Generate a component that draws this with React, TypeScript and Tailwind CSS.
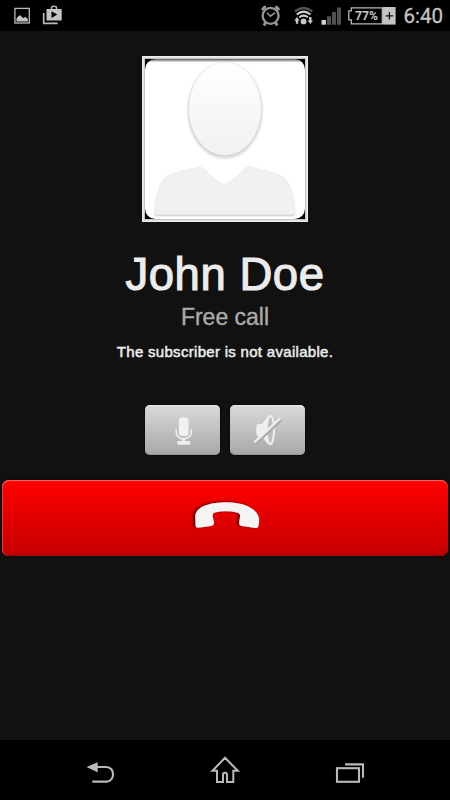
import React from "react";

function StatusBar() {
  return (
    <header className="flex h-[31px] shrink-0 items-start justify-between bg-black">
      <svg className="h-[31px] w-[70px]" viewBox="0 0 70 31" fill="none">
        <rect x="14.9" y="8.4" width="14.4" height="14.6" stroke="#b9b9b9" strokeWidth="1.3" />
        <path d="M16.5 21.5v-3l2-2.5 2-.7 1.5 2 1.5.8 2-1.2 2 1.5.5 3z" fill="#c4c4c4" />
        <path d="M43.7 13v10.3h14" stroke="#b9b9b9" strokeWidth="1.7" />
        <path d="M46.5 9h15.2v11.5H46.5z" fill="#c4c4c4" />
        <path d="M51.5 9V7.8Q51.5 6.2 54 6.2t2.5 1.6V9" stroke="#b9b9b9" strokeWidth="1.5" />
        <path d="M51.5 11.3v6.6l5.8-3.3z" fill="#000" />
      </svg>
      <div className="flex">
        <svg className="h-[31px] w-[145px]" viewBox="255 0 145 31" fill="none">
          <g stroke="#969696">
            <circle cx="270.6" cy="15.8" r="8" strokeWidth="2.3" />
            <path d="M267 12.8l3.4 3.4 4.6-3.6" strokeWidth="1.5" />
            <path d="M262.5 10.3q.5-3 3.5-3.5M278.7 10.3q-.5-3-3.5-3.5M265.6 22.5l-1.6 3M275.6 22.5l1.6 3" strokeWidth="2.8" />
          </g>
          <path d="M294.8 11.4Q303.5 4.7 312.3 11.4" stroke="#555" strokeWidth="2.3" />
          <path d="M296.8 14.5Q303.5 8.7 310.4 14.5M299.3 17.3q4.3-3.4 8.7 0" stroke="#d0d0d0" strokeWidth="2" />
          <circle cx="303.6" cy="21.4" r="2.9" fill="#c7c7c7" />
          <path d="M294.2 20.5l2.8-3.4 2.7 3.4h-1.5v3.3h-2.4v-3.3zM307.6 20.5h1.5v-3.4h2.4v3.4h1.5l-2.7 3.4z" fill="#c4c4c4" />
          <path d="M321.5 20h4.5v4.7h-4.5z" fill="#cecece" />
          <path d="M327 16.3h4v8.4h-4zM332 12h4v12.7h-4zM337 7.5h4v17.2h-4z" fill="#505050" />
          <path d="M382.3 7.8h-31v3h-2.5v9h2.5v4h31z" stroke="#b8b8b8" strokeWidth="1.3" />
          <path d="M383 7h12.6v17.6H383z" fill="#c4c4c4" />
          <path d="M389.4 12v7.6M385.7 15.8h7.4" stroke="#111" strokeWidth="1.3" />
          <text x="355" y="19.8" textLength="23" lengthAdjust="spacingAndGlyphs" fill="#c8c8c8" fontFamily="Roboto, sans-serif" fontWeight="700" fontSize="12.5">77%</text>
        </svg>
        <span className="mt-[3px] w-[50px] whitespace-nowrap pl-[3.5px] font-['Roboto',sans-serif] text-[20.5px] leading-[26px] text-[#c4c4c4] [-webkit-text-stroke:0.3px_#c4c4c4]">6:40</span>
      </div>
    </header>
  );
}

function Avatar() {
  return (
    <div className="mt-[25px] h-[166px] w-[166px] border border-[#ededed] bg-[#e2e2e2] p-px">
      <div className="h-full w-full border border-[#c6c6c6] bg-black">
        <svg className="h-full w-full" viewBox="145 59 160 160" fill="none">
          <defs>
            <linearGradient id="head" x1="0" y1="0" x2="0" y2="1"><stop stopColor="#fff" /><stop offset="1" stopColor="#f1f1f1" /></linearGradient>
            <linearGradient id="edge" x1="0" y1="0" x2="0" y2="1"><stop stopColor="#f3f3f3" /><stop offset="1" stopColor="#c5c5c5" /></linearGradient>
            <linearGradient id="top" x1="0" y1="0" x2="0" y2="1"><stop stopColor="#555" /><stop offset=".01" stopColor="#aaa" /><stop offset=".022" stopColor="#fff" /></linearGradient>
            <filter id="soft"><feGaussianBlur stdDeviation="1" /></filter>
          </defs>
          <rect x="145" y="59" width="160" height="160" rx="10.5" fill="url(#top)" />
          <ellipse cx="225" cy="110.5" rx="36.5" ry="47" stroke="#aaa" strokeWidth="1.5" opacity=".65" filter="url(#soft)" />
          <ellipse cx="225" cy="109.2" rx="36.5" ry="47" fill="url(#head)" stroke="url(#edge)" strokeWidth="1" />
          <path d="M154.5 216Q157 187 165.5 178.5C170 174 184 171.3 198 167.8Q202 167 205 170.5C211 177 217 182.5 223 184.7Q225 185.5 227 184.2C234 181 239 175 246 168.5Q248 166.8 251 167.7C264 170.5 279 174 284 178.5Q293 187 295 216z" fill="#ccc" filter="url(#soft)" opacity=".75" />
          <path d="M154 214.5Q157 187 165.5 178.5C170 174 184 171.3 198 167.8Q202 167 205 170.5C211 177 217 182.5 223 184.7Q225 185.5 227 184.2C234 181 239 175 246 168.5Q248 166.8 251 167.7C264 170.5 279 174 284 178.5Q293 187 295 214.5z" fill="#f1f1f1" stroke="#ededed" strokeWidth=".7" />
          <path d="M155 215.3h139" stroke="#cfcfcf" strokeWidth=".8" />
        </svg>
      </div>
    </div>
  );
}

const controlStyle =
  "flex h-[50px] w-[75px] items-center justify-center rounded-[5px] bg-gradient-to-b from-[#dadada] to-[#a8a8a8] shadow-[0_0_2px_#000,inset_0_1px_1px_#e5e5e5,inset_0_-1px_1px_#929292]";

function CallControls() {
  return (
    <div className="mt-[41px] flex gap-[10px]">
      <button className={controlStyle} aria-label="Mute microphone">
        <svg className="h-[50px] w-[75px]" viewBox="145 405 75 50" fill="none">
          <rect x="178.8" y="417.2" width="9.8" height="18.8" rx="3.5" fill="#f1f1f1" />
          <path d="M176.1 429v2q0 7.4 7.6 7.8 7.6-.4 7.6-7.8v-2" stroke="#ededed" strokeWidth="1.6" />
          <path d="M181 438h5.4l-1.5 3.2h-2.4z" fill="#eee" />
          <rect x="177" y="441" width="13.5" height="3.8" rx="1.7" fill="#eee" />
        </svg>
      </button>
      <button className={controlStyle} aria-label="Speaker off">
        <svg className="h-[50px] w-[75px]" viewBox="230 405 75 50" fill="none">
          <path d="M257.5 424h4.5l4.5-6q2-2.8 4-2.8v29.6q-2 0-4-2.4l-4.8-5.9H258q-1.8-1-1.8-6.3t1.3-6.2z" fill="#efefef" />
          <ellipse cx="270.4" cy="430" rx="3.6" ry="14" fill="#bdbdbd" stroke="#eee" strokeWidth="2" />
          <path d="M256 443.4l25.5-24" stroke="#aaa" strokeWidth="3" />
          <path d="M254.5 442.2l26-24" stroke="#eee" strokeWidth="2.5" />
        </svg>
      </button>
    </div>
  );
}

function NavigationBar() {
  return (
    <nav className="flex h-[60px] shrink-0 items-center justify-between bg-black px-[80px]">
      <svg className="h-[60px] w-[40px]" viewBox="80 740 40 60" fill="none">
        <path d="M97.7 762.2v10l-11.2-5.2z" fill="#bcbcbc" />
        <path d="M96 767h10.3c9 0 9 14.6 0 14.6H92.3" stroke="#b9b9b9" strokeWidth="2.1" />
      </svg>
      <svg className="h-[60px] w-[40px]" viewBox="205 740 40 60" fill="none">
        <path d="M225 757.8l-12.5 12.9h4.5v11.3h6V775q0-2.3 2-2.3t2 2.3v7h6.3v-11.3h4.5z" stroke="#b9b9b9" strokeWidth="2" />
      </svg>
      <svg className="h-[60px] w-[40px]" viewBox="330 740 40 60" fill="none">
        <rect x="337" y="768.2" width="22" height="13.6" stroke="#b9b9b9" strokeWidth="2.1" />
        <path d="M345 764.4h18v13.4" stroke="#b9b9b9" strokeWidth="2.1" />
      </svg>
    </nav>
  );
}

export default function App() {
  return (
    <div className="flex h-[800px] w-[450px] flex-col overflow-hidden bg-[#111] font-['Liberation_Sans',Arial,sans-serif]">
      <StatusBar />
      <main className="flex flex-1 flex-col items-center">
        <Avatar />
        <h1 className="mt-[28px] whitespace-nowrap text-[45.5px] leading-[50px] tracking-[0.55px] text-[#ececec] [-webkit-text-stroke:1.1px_#ececec]">John Doe</h1>
        <p className="mt-[3px] whitespace-nowrap text-[23px] leading-[28px] text-[#aaa] [-webkit-text-stroke:0.4px_#aaa]">Free call</p>
        <p className="mt-[11px] whitespace-nowrap text-[15px] leading-[20px] tracking-[0.3px] text-[#ececec] [-webkit-text-stroke:0.5px_#ececec]">The subscriber is not available.</p>
        <div className="pt-[2px]">
          <CallControls />
        </div>
        <button aria-label="End call" className="mt-[25px] flex h-[76px] w-[446px] justify-center rounded-[7px] bg-gradient-to-b from-[#ff0000] to-[#c60000] shadow-[0_0_2px_#000,inset_0_1px_1px_#ff6868,inset_1px_0_1px_#f33,inset_0_-2px_2px_#a00000]">
          <svg className="h-[76px] w-[90px]" viewBox="180 480 90 76">
            <defs><filter id="phoneShadow"><feDropShadow dx="-1.8" dy="-.4" stdDeviation=".8" floodColor="#300" floodOpacity=".85" /></filter></defs>
            <path d="M198.3 527.8q-2.5.2-2.8-2.5l-.2-8.8c.2-9 12-13.6 28.8-14.2 20-.5 33.8 6.8 35 16.2.2 3 .1 6-.9 8.2-.5 1.2-1.5 1.5-3 1.2l-13.6-2q-2.8-.5-2.4-3.1l.9-6.5q.3-2.8-2.4-3.6-12-2.6-22.7-.1-2.6.8-2.3 3.6l1.3 6.3q.2 3-2.5 3.5z" fill="#f4f4f4" filter="url(#phoneShadow)" />
          </svg>
        </button>
      </main>
      <NavigationBar />
    </div>
  );
}
